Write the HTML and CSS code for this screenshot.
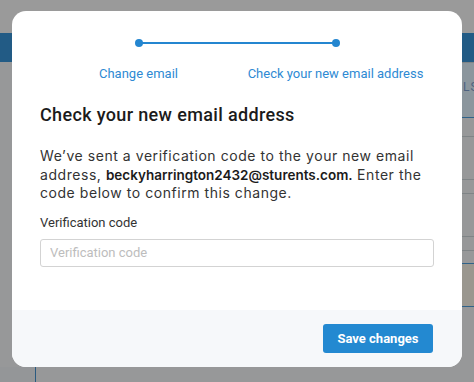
FILE: index.html
```html
<!DOCTYPE html>
<html lang="en">
<head>
    <meta charset="UTF-8">
    <meta name="viewport" content="width=device-width, initial-scale=1.0">
    <title>Change email</title>
    <link rel="stylesheet" href="styles.css">
</head>
<body>
    <!-- pagina por tras do overlay -->
    <div class="page">
        <div class="page-top"></div>
        <div class="page-header"></div>
        <div class="page-main">
            <div class="page-side"></div>
            <div class="page-table">
                <div class="row row-head"><span>LS</span></div>
                <div class="row row-gap"></div>
                <div class="row row-a"></div>
                <div class="row row-b"></div>
                <div class="row row-a"></div>
                <div class="row row-b"></div>
                <div class="row row-c"></div>
                <div class="row row-warm"></div>
            </div>
        </div>
    </div>

    <div class="modal">
        <div class="modal-body">
            <div class="steps">
                <div class="step">
                    <span class="dot"></span>
                    <span class="step-label">Change email</span>
                </div>
                <div class="step">
                    <span class="dot"></span>
                    <span class="step-label">Check your new email address</span>
                </div>
            </div>
            <h2>Check your new email address</h2>
            <p class="intro">We’ve sent a verification code to the your new email address, <strong>beckyharrington2432@sturents.com.</strong> Enter the code below to confirm this change.</p>
            <div class="field">
                <label for="code">Verification code</label>
                <input type="text" id="code" placeholder="Verification code">
            </div>
        </div>
        <div class="modal-footer">
            <button type="button">Save changes</button>
        </div>
    </div>
</body>
</html>
```

FILE: styles.css
```css
/* Fundo escurecido */
body {
    margin: 0;
    background-color: #989999;
    font-family: Roboto, "Liberation Sans", Arial, sans-serif;
    overflow: hidden;
}
.page {
    height: 382px;
    display: flex;
    flex-direction: column;
}
.page-top {
    height: 33px;
    background-color: #9a9a9a;
}
.page-header {
    height: 29px;
    background-color: #225b85;
}
.page-main {
    flex: 1;
    display: flex;
    background-color: #979899;
}
.page-side {
    width: 35px;
    border-right: 1px solid #2a5a80;
    margin-top: 305px;
    background-color: #949698;
}
.page-table {
    margin-left: auto;
    width: 36px;
    display: flex;
    flex-direction: column;
    overflow: hidden;
}
.row {
    border-bottom: 1px solid #7f8486;
}
.row-head {
    height: 56px;
    background-color: #8b969d;
    border-top: 1px solid #7f8486;
    border-bottom: 1px solid #2f6289;
    font-size: 12px;
    color: #4d6280;
    padding: 17px 0 0 25px;
    box-sizing: border-box;
    letter-spacing: 1px;
    white-space: nowrap;
}
.row-gap { height: 18px; }
.row-a { height: 42px; }
.row-b { height: 13px; }
.row-c {
    height: 12px;
    border-bottom-color: #2f6289;
}
.row-warm {
    height: 42px;
    background-color: #9a978f;
    border-bottom-color: #2f6289;
}

/* Modal */
.modal {
    position: absolute;
    left: 12px;
    top: 11px;
    width: 450px;
    background-color: #fff;
    border-radius: 14px;
    overflow: hidden;
}
.modal-body {
    height: 299px;
    padding: 28px 28px 0;
    box-sizing: border-box;
}
.steps {
    display: grid;
    grid-template-columns: 1fr 1fr;
    position: relative;
}
.steps::before {
    content: "";
    position: absolute;
    left: 25%;
    right: 25%;
    top: 3px;
    height: 2px;
    background-color: #2486d0;
}
.step {
    display: flex;
    flex-direction: column;
    align-items: center;
}
.dot {
    width: 8px;
    height: 8px;
    border-radius: 50%;
    background-color: #2486d0;
}
.step-label {
    margin-top: 19px;
    font-size: 13px;
    line-height: 16px;
    color: #2e8ad3;
}
h2 {
    margin: 21px 0 0;
    font-size: 18px;
    line-height: 24px;
    font-weight: 500;
    letter-spacing: 0.35px;
    color: #1b1b1b;
}
.intro {
    margin: 20px 0 0;
    font-family: Inter, "Open Sans", sans-serif;
    font-size: 14px;
    line-height: 18.5px;
    letter-spacing: 0.55px;
    color: #333;
}
.intro strong {
    font-size: 13.5px;
    font-weight: 600;
    letter-spacing: 0;
    color: #1b1b1b;
}
.field {
    margin-top: 12px;
}
label {
    display: block;
    font-size: 13px;
    line-height: 16px;
    color: #333;
    margin-bottom: 8px;
}
input {
    display: block;
    width: 100%;
    height: 28px;
    box-sizing: border-box;
    padding: 0 9px;
    border: 1px solid #d3d3d3;
    border-radius: 3px;
    font-family: Roboto, sans-serif;
    font-size: 13px;
    color: #333;
}
input::placeholder {
    color: #bdbdbd;
}
.modal-footer {
    height: 57px;
    background-color: #f6f8fa;
    display: flex;
    justify-content: flex-end;
    align-items: center;
    padding-right: 29px;
}
button {
    width: 110px;
    height: 29px;
    border: none;
    border-radius: 3px;
    background-color: #2389d1;
    color: #fff;
    font-family: Roboto, sans-serif;
    font-size: 13px;
    font-weight: bold;
    cursor: pointer;
}
```
